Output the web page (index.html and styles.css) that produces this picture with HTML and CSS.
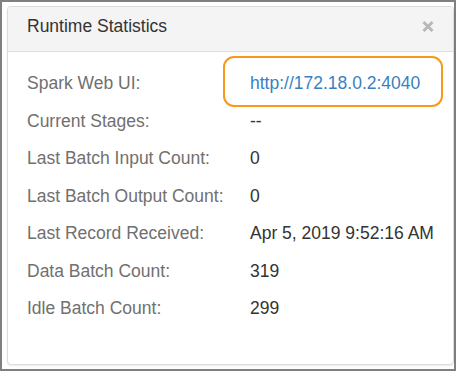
FILE: index.html
```html
<!DOCTYPE html>
<html lang="en">
  <head>
    <meta charset="UTF-8" />
    <meta name="viewport" content="width=device-width, initial-scale=1.0" />
    <title>Runtime Statistics</title>
    <link rel="stylesheet" href="styles.css">
  </head>
  <body>
    <div class="frame">
      <div class="panel">
        <div class="panel-header">
          <h3 class="panel-title">Runtime Statistics</h3>
          <button class="close" aria-label="Close">
            <svg width="12" height="13" viewBox="0 0 12 13">
              <path d="M1.5 2 L10.5 11 M10.5 2 L1.5 11" stroke="#b8b8b8" stroke-width="3" stroke-linecap="butt" />
            </svg>
          </button>
        </div>

        <div class="panel-body">
          <!-- highlight around the Spark UI link -->
          <div class="highlight"></div>

          <div class="stats">
            <div class="label">Spark Web UI:</div>
            <div class="value"><a href="#">http://172.18.0.2:4040</a></div>

            <div class="label">Current Stages:</div>
            <div class="value">--</div>

            <div class="label">Last Batch Input Count:</div>
            <div class="value">0</div>

            <div class="label">Last Batch Output Count:</div>
            <div class="value">0</div>

            <div class="label">Last Record Received:</div>
            <div class="value">Apr 5, 2019 9:52:16 AM</div>

            <div class="label">Data Batch Count:</div>
            <div class="value">319</div>

            <div class="label">Idle Batch Count:</div>
            <div class="value">299</div>
          </div>
        </div>
      </div>
    </div>
  </body>
</html>
```

FILE: styles.css
```css
/* Basic Reset */
* {
  margin: 0;
  padding: 0;
  box-sizing: border-box;
}

body {
  font-family: "Liberation Sans", Arial, Helvetica, sans-serif;
  background: #ffffff;
}

.frame {
  width: 456px;
  height: 371px;
  border: 2px solid #808080;
  padding: 4px 8px 4px 5px;
  display: flex;
}

.panel {
  flex: 1;
  display: flex;
  flex-direction: column;
  border: 1px solid #dcdcdc;
  border-radius: 4px;
  box-shadow: 0 1px 2px rgba(0, 0, 0, 0.08);
  background: #ffffff;
}

.panel-header {
  height: 45px;
  padding: 9px 19px 0 19px;
  display: flex;
  justify-content: space-between;
  background: #f4f4f4;
  border-bottom: 1px solid #dddddd;
  border-radius: 3px 3px 0 0;
}

.panel-title {
  font-size: 17.5px;
  font-weight: normal;
  color: #333333;
  line-height: 20px;
}

.close {
  border: none;
  background: none;
  height: 13px;
  margin-top: 4px;
  display: flex;
}

.panel-body {
  flex: 1;
  position: relative;
  padding: 13px 19px 0 19px;
}

.highlight {
  position: absolute;
  left: 215px;
  top: 4px;
  width: 220px;
  height: 51px;
  border: 2px solid #f59a1b;
  border-radius: 11px;
}

.stats {
  display: grid;
  grid-template-columns: 223px 1fr;
  grid-auto-rows: 37.5px;
  font-size: 17.5px;
  line-height: 37.5px;
}

.label {
  color: #707070;
}

.value {
  color: #333333;
  white-space: nowrap;
}

.value a {
  color: #3a7fc0;
  text-decoration: none;
}
```
